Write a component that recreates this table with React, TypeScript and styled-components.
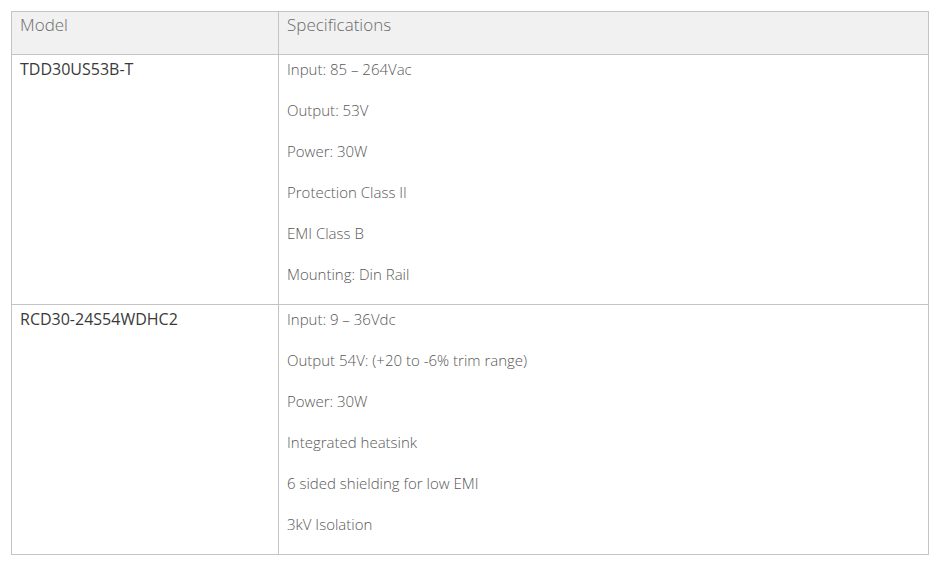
import React from "react";
import styled, { createGlobalStyle } from "styled-components";

const Global = createGlobalStyle`
  html, body { margin: 0; padding: 0; background: #fff; }
  body { font-family: "Open Sans", "Noto Sans", sans-serif; }
`;

const Page = styled.div`
  padding: 11px 7px 0 11px;
`;

const Table = styled.table`
  width: 918px;
  border-collapse: collapse;
  border: 1px solid #c4c4c4;
  table-layout: fixed;
`;

const HeadCell = styled.th`
  background: #f1f1f1;
  border: 1px solid #c4c4c4;
  text-align: left;
  vertical-align: top;
  font-weight: 300;
  font-size: 17px;
  line-height: 24px;
  color: #6b6b6b;
  padding: 1px 8px 17px;
  height: 24px;
`;

const Cell = styled.td<{ $model?: boolean }>`
  border: 1px solid #c4c4c4;
  vertical-align: top;
  padding: 4px 8px 0;
  font-size: ${(p) => (p.$model ? "16px" : "15px")};
  font-weight: ${(p) => (p.$model ? 400 : 300)};
  color: ${(p) => (p.$model ? "#3a3a3a" : "#585858")};
`;

const Spec = styled.p`
  margin: 0 0 20px;
  line-height: 21px;
  white-space: nowrap;
  &:last-child {
    margin-bottom: 19px;
  }
`;

const ModelName = styled.div`
  line-height: 21px;
`;

const rows = [
  {
    model: "TDD30US53B-T",
    specs: [
      "Input: 85 – 264Vac",
      "Output: 53V",
      "Power: 30W",
      "Protection Class II",
      "EMI Class B",
      "Mounting: Din Rail",
    ],
  },
  {
    model: "RCD30-24S54WDHC2",
    specs: [
      "Input: 9 – 36Vdc",
      "Output 54V: (+20 to -6% trim range)",
      "Power: 30W",
      "Integrated heatsink",
      "6 sided shielding for low EMI",
      "3kV Isolation",
    ],
  },
];

export default function App() {
  return (
    <Page>
      <Global />
      <Table>
        <colgroup>
          <col style={{ width: 267 }} />
          <col />
        </colgroup>
        <thead>
          <tr>
            <HeadCell>Model</HeadCell>
            <HeadCell>Specifications</HeadCell>
          </tr>
        </thead>
        <tbody>
          {rows.map((r) => (
            <tr key={r.model}>
              <Cell $model>
                <ModelName>{r.model}</ModelName>
              </Cell>
              <Cell>
                {r.specs.map((s) => (
                  <Spec key={s}>{s}</Spec>
                ))}
              </Cell>
            </tr>
          ))}
        </tbody>
      </Table>
    </Page>
  );
}
